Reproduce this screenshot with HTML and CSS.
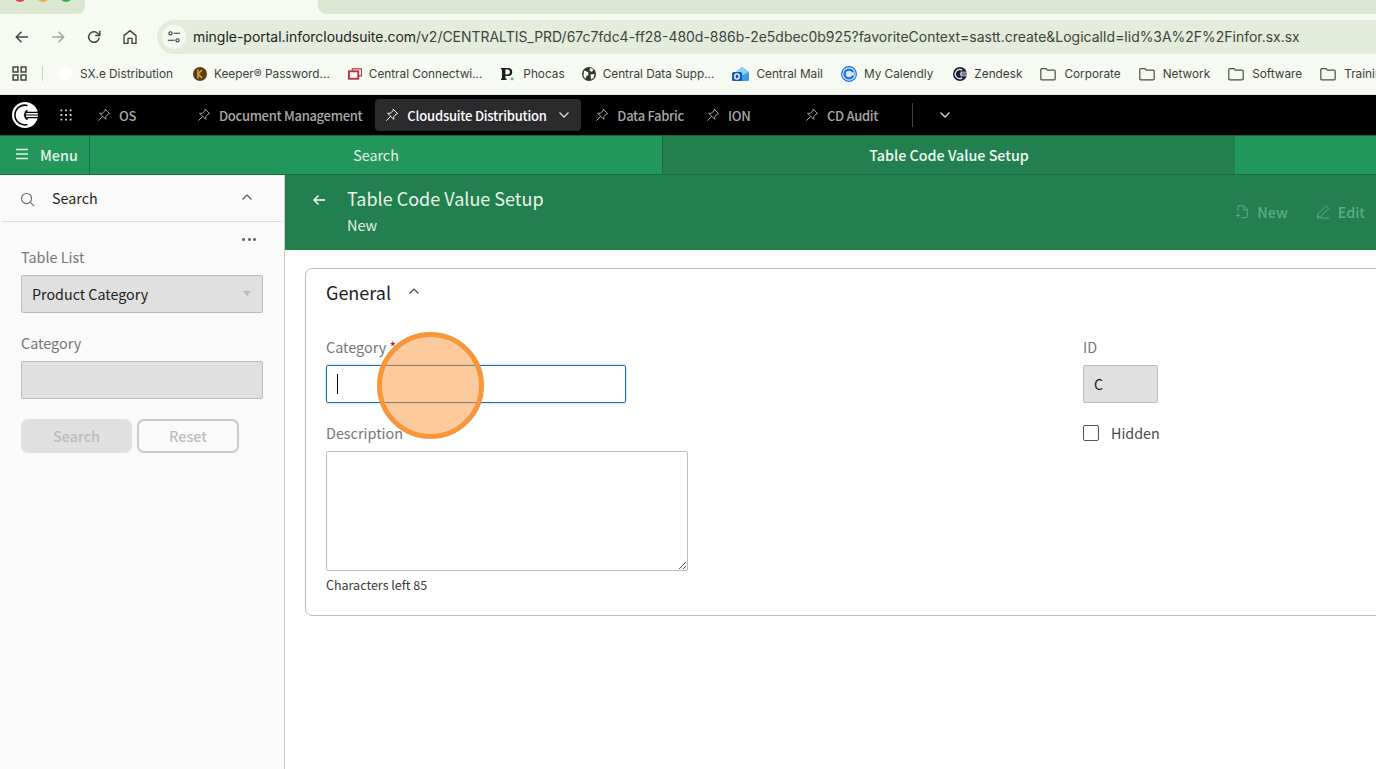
FILE: index.html
```html
<!DOCTYPE html>
<html lang="en">
<head>
<meta charset="utf-8">
<title>Table Code Value Setup</title>
<link rel="stylesheet" href="styles.css">
</head>
<body>
<svg class="defs" width="0" height="0" aria-hidden="true">
  <symbol id="pin" viewBox="0 0 16 16"><path d="M9.6 1.6 14.4 6.4 12.7 6.9 10 10 10 13 3 6 6 6 9.1 3.3ZM6.5 9.5 1.8 14.2" fill="none" stroke="currentColor" stroke-width="1.1" stroke-linejoin="round" stroke-linecap="round"/></symbol>
  <symbol id="folder" viewBox="0 0 16 14"><path d="M.8 2.6Q.8 1.6 1.8 1.6H6L7.4 3.2H14.2Q15.2 3.2 15.2 4.2V11.8Q15.2 12.8 14.2 12.8H1.8Q.8 12.8.8 11.8Z" fill="none" stroke="#4a4f48" stroke-width="1.2"/></symbol>
  <symbol id="chev-up" viewBox="0 0 12 8"><path d="M1.5 6.5 6 2 10.5 6.5" fill="none" stroke="currentColor" stroke-width="1.2"/></symbol>
  <symbol id="chev-down" viewBox="0 0 12 8"><path d="M1.5 1.5 6 6 10.5 1.5" fill="none" stroke="currentColor" stroke-width="1.3"/></symbol>
</svg>

<header class="chrome">
  <div class="tabstrip">
    <div class="strip-left"><i class="light red"></i><i class="light yellow"></i><i class="light green"></i></div>
    <div class="strip-tab"></div>
    <div class="strip-right"></div>
  </div>
  <div class="toolbar">
    <div class="tool-buttons">
      <svg class="tool" viewBox="0 0 16 16"><path d="M14 8H2.5M7.5 2.8 2.3 8l5.2 5.2" fill="none" stroke="#41463f" stroke-width="1.5"/></svg>
      <svg class="tool" viewBox="0 0 16 16"><path d="M2 8h11.5M8.5 2.8 13.7 8l-5.2 5.2" fill="none" stroke="#a3a8a0" stroke-width="1.5"/></svg>
      <svg class="tool" viewBox="0 0 16 16"><path d="M13.2 8.6A5.3 5.3 0 1 1 11.6 4.2L13.4 6" fill="none" stroke="#41463f" stroke-width="1.5"/><path d="M13.8 1.8V6.4H9.2" fill="none" stroke="#41463f" stroke-width="1.5"/></svg>
      <svg class="tool" viewBox="0 0 16 16"><path d="M2 14.4V6.6L8 1.6l6 5v7.8H10V9.4H6v5Z" fill="none" stroke="#41463f" stroke-width="1.4" stroke-linejoin="round"/></svg>
    </div>
    <div class="urlbar">
      <span class="site-info"><svg viewBox="0 0 16 16" width="14" height="14"><circle cx="4" cy="3.8" r="1.9" fill="none" stroke="#333" stroke-width="1.2"/><path d="M7.5 3.8H15M1 11.8H8.5" stroke="#333" stroke-width="1.2"/><circle cx="12" cy="11.8" r="1.9" fill="none" stroke="#333" stroke-width="1.2"/></svg></span>
      <span class="url">mingle-portal.inforcloudsuite.com<span class="url-path">/v2/CENTRALTIS_PRD/67c7fdc4-ff28-480d-886b-2e5dbec0b925?favoriteContext=sastt.create&amp;LogicalId=lid%3A%2F%2Finfor.sx.sx</span></span>
    </div>
  </div>
  <nav class="bookmarks">
    <svg class="apps" viewBox="0 0 14 14"><path d="M1 1h4.5v4.5H1ZM8.5 1H13v4.5H8.5ZM1 8.5h4.5V13H1ZM8.5 8.5H13V13H8.5Z" fill="none" stroke="#3f443d" stroke-width="1.4"/></svg>
    <span class="bm-divider"></span>
    <a class="bm bm-sxe"><svg class="bm-icon" viewBox="0 0 14 14"><circle cx="7" cy="7" r="6.5" fill="#fff"/></svg>SX.e Distribution</a>
    <a class="bm"><svg class="bm-icon" viewBox="0 0 14 14"><circle cx="7" cy="7" r="7" fill="#5b3d12"/><path d="M5 2.5v9M5 7l4-4M5 7l4 4" stroke="#e0a63a" stroke-width="1.5" fill="none"/></svg>Keeper® Password...</a>
    <a class="bm"><svg class="bm-icon" viewBox="0 0 15 13"><path d="M4.5 3V1H14.4V8.5H11.5" fill="none" stroke="#b5333a" stroke-width="1.1"/><rect x="1" y="3.6" width="10" height="8" fill="none" stroke="#b5333a" stroke-width="2"/></svg>Central Connectwi...</a>
    <a class="bm bm-phocas"><svg class="bm-icon" viewBox="0 0 14 14"><path d="M1 1H8.2A4 4 0 0 1 8.2 9H5.4V11.6H6.6V13H1V11.6H2V2.4H1ZM5.4 2.6V7.4H7.6A2.4 2.4 0 0 0 7.6 2.6Z" fill="#1b1b1b" fill-rule="evenodd"/><rect x="10.8" y="10.6" width="2.6" height="2.6" fill="#45b7a8"/></svg>Phocas</a>
    <a class="bm"><svg class="bm-icon" viewBox="0 0 14 14"><circle cx="7" cy="7" r="7" fill="#33372f"/><path d="M2 3.5 6 5 6.5 8 4.5 9 3.5 12 1.5 9ZM8 1 11.5 2 10 5 7.5 3.5ZM8.5 7.5 12.5 7 11.5 11 9 12.500Z" fill="#f6faf1"/></svg>Central Data Supp...</a>
    <a class="bm bm-mail"><svg class="bm-icon bm-icon-wide" viewBox="0 0 17 16"><path d="M4 6 10 1 17 6V14Q17 15 16 15H8Z" fill="#3b9be8"/><path d="M10 1 17 6 11 9 4 6Z" fill="#8fd0f5"/><rect y="6" width="10" height="9" rx="1.5" fill="#0f5fb4"/><ellipse cx="5" cy="10.5" rx="2.2" ry="2.6" fill="none" stroke="#fff" stroke-width="1.3"/></svg>Central Mail</a>
    <a class="bm bm-cal"><svg class="bm-icon bm-icon-cal" viewBox="0 0 16 16"><circle cx="8" cy="8" r="7.4" fill="#dbe9fb" stroke="#1268e0" stroke-width="1.1"/><circle cx="8" cy="8" r="4.4" fill="none" stroke="#1a73f0" stroke-width="2.4"/><path d="M8 8 13 6V10Z" fill="#dbe9fb"/></svg>My Calendly</a>
    <a class="bm bm-zen"><svg class="bm-icon" viewBox="0 0 26 26"><circle cx="13" cy="13" r="13" fill="#1c1f33"/><path d="M17 5.8A8.4 8.4 0 1 0 17 20.2" fill="none" stroke="#f5f7f2" stroke-width="2.2"/><path d="M16 10A4 4 0 0 0 16 16" fill="none" stroke="#f5f7f2" stroke-width="2"/><path d="M14 9.6H26M13 13H26M14 16.4H26" stroke="#f5f7f2" stroke-width="1.5"/></svg>Zendesk</a>
    <a class="bm bm-folder"><svg class="bm-icon-folder"><use href="#folder"/></svg>Corporate</a>
    <a class="bm bm-folder"><svg class="bm-icon-folder"><use href="#folder"/></svg>Network</a>
    <a class="bm bm-folder"><svg class="bm-icon-folder"><use href="#folder"/></svg>Software</a>
    <a class="bm bm-folder"><svg class="bm-icon-folder"><use href="#folder"/></svg>Training</a>
  </nav>
</header>

<div class="app">
  <div class="topnav">
    <svg class="logo" viewBox="0 0 26 26">
      <circle cx="13" cy="13" r="13" fill="#fff"/>
      <path d="M15.5 3.6A9.8 9.8 0 1 0 15.5 22.4" fill="none" stroke="#000" stroke-width="1.6"/>
      <path d="M15.5 8.4A5.4 5.4 0 0 0 15.5 17.6" fill="none" stroke="#000" stroke-width="1.6"/>
      <path d="M13 10.4H26M11.8 13H26M13 15.6H26" stroke="#000" stroke-width="1.2"/>
    </svg>
    <svg class="grid-icon" viewBox="0 0 14 14"><path d="M1.5 1.5h1.8v1.8H1.5zM6.1 1.5h1.8v1.8H6.1zM10.7 1.5h1.8v1.8h-1.8zM1.5 6.1h1.8v1.8H1.5zM6.1 6.1h1.8v1.8H6.1zM10.7 6.1h1.8v1.8h-1.8zM1.5 10.7h1.8v1.8H1.5zM6.1 10.7h1.8v1.8H6.1zM10.7 10.7h1.8v1.8h-1.8z" fill="#d8d8d8"/></svg>
    <a class="navtab navtab-min"><svg class="pin"><use href="#pin"/></svg>OS</a>
    <a class="navtab"><svg class="pin"><use href="#pin"/></svg>Document Management</a>
    <a class="navtab navtab-active"><svg class="pin"><use href="#pin"/></svg>Cloudsuite Distribution<svg class="nav-chev"><use href="#chev-down"/></svg></a>
    <a class="navtab navtab-fabric"><svg class="pin"><use href="#pin"/></svg>Data Fabric</a>
    <a class="navtab navtab-ion"><svg class="pin"><use href="#pin"/></svg>ION</a>
    <a class="navtab"><svg class="pin"><use href="#pin"/></svg>CD Audit</a>
    <span class="nav-divider"></span>
    <svg class="nav-more"><use href="#chev-down"/></svg>
  </div>

  <div class="modulebar">
    <a class="menu-btn"><svg class="menu-icon" viewBox="0 0 14 12"><path d="M1 1.5h12M1 6h12M1 10.5h12" stroke="#e4f3ea" stroke-width="1.3"/></svg>Menu</a>
    <a class="modtab">Search</a>
    <a class="modtab modtab-active">Table Code Value Setup</a>
  </div>

  <div class="workspace">
    <aside class="sidebar">
      <div class="side-head">
        <svg class="side-search" viewBox="0 0 16 16"><circle cx="7" cy="7" r="5.4" fill="none" stroke="#666" stroke-width="1.1"/><path d="M11 11 15 15" stroke="#666" stroke-width="1.1"/></svg>
        <span class="side-title">Search</span>
        <svg class="side-chev"><use href="#chev-up"/></svg>
      </div>
      <div class="side-more"><i></i><i></i><i></i></div>
      <form class="side-form">
        <label class="label">Table List</label>
        <div class="field-disabled field-select">Product Category<span class="caret"></span></div>
        <label class="label label-gap">Category</label>
        <div class="field-disabled"></div>
        <div class="side-actions">
          <button type="button" class="btn btn-search">Search</button>
          <button type="button" class="btn btn-reset">Reset</button>
        </div>
      </form>
    </aside>

    <main class="content">
      <div class="pagehead">
        <svg class="back" viewBox="0 0 14 12"><path d="M13 6H2M6.5 1.5 2 6l4.500 4.500" fill="none" stroke="#fff" stroke-width="1.4"/></svg>
        <div class="pagehead-text">
          <h1 class="page-title">Table Code Value Setup</h1>
          <div class="page-sub">New</div>
        </div>
        <div class="page-actions">
          <a class="action"><svg class="action-icon" viewBox="0 0 16 16"><path d="M3.5 7V1.5H10L14 5.500V13.500Q14 15 12.500 15H7M9.500 1.500V6H14M1 12.500H6M3.500 10V15" fill="none" stroke="currentColor" stroke-width="1.100"/></svg>New</a>
          <a class="action"><svg class="action-icon" viewBox="0 0 16 16"><path d="M11.500 1.500 14.500 4.500 5.500 13.500 1.500 14.500 2.500 10.500ZM1 15.500H15" fill="none" stroke="currentColor" stroke-width="1.100"/></svg>Edit</a>
        </div>
      </div>

      <section class="card">
        <div class="card-head">
          <h2 class="card-title">General</h2>
          <svg class="card-chev"><use href="#chev-up"/></svg>
        </div>
        <div class="card-body">
          <div class="col-left">
            <label class="label">Category <span class="req">*</span></label>
            <div class="input-active"><span class="cursor"></span></div>
            <label class="label label-desc">Description</label>
            <div class="textarea">
              <svg class="grip" viewBox="0 0 8 8"><path d="M1 8 8 1M5 8 8 5" stroke="#555" stroke-width="1"/></svg>
            </div>
            <div class="counter">Characters left 85</div>
          </div>
          <div class="col-right">
            <label class="label">ID</label>
            <div class="field-disabled field-id">C</div>
            <div class="check-row"><span class="checkbox"></span><span class="check-label">Hidden</span></div>
          </div>
        </div>
      </section>
    </main>
  </div>
</div>

<div class="click-marker"></div>
</body>
</html>
```

FILE: styles.css
```css
* { box-sizing: border-box; }
html, body { margin: 0; height: 769px; overflow: hidden; }
body { font-family: "Noto Sans CJK SC", "Noto Sans", sans-serif; background: #fff; color: #222; }
.defs { display: block; height: 0; }
a { text-decoration: none; color: inherit; }
h1, h2 { margin: 0; font-weight: 400; }

/* browser chrome */
.chrome { height: 95px; background: #f6faf2; border-bottom: 1px solid #e3e5e0; font-family: Inter, "Liberation Sans", sans-serif; overflow: hidden; }
.tabstrip { display: flex; height: 14px; overflow: hidden; }
.strip-left { width: 85px; display: flex; gap: 11px; padding-left: 14px; background: #dbe8d1; border-radius: 0 0 8px 0; }
.strip-tab { width: 233px; }
.strip-right { flex: 1; background: #dbe8d1; border-radius: 0 0 0 8px; }
.light { display: block; width: 12px; height: 12px; border-radius: 50%; margin-top: -10px; }
.red { background: #e0443e; }
.yellow { background: #e2b33a; }
.green { background: #35b34a; }

.toolbar { display: flex; align-items: center; height: 34px; margin-top: 6px; }
.tool-buttons { display: flex; width: 157px; padding-left: 14px; gap: 20px; }
.tool { width: 16px; height: 16px; }
.urlbar { flex: 1; height: 34px; display: flex; align-items: center; background: #e4ecdc; border-radius: 17px 0 0 17px; padding-left: 5px; }
.site-info { width: 24px; height: 24px; border-radius: 50%; background: #f6faf2; display: flex; align-items: center; justify-content: center; }
.url { margin-left: 7px; padding-bottom: 2px; font-size: 13.960px; color: #1f231e; white-space: nowrap; }
.url-path { color: #3e443c; }

.bookmarks { display: flex; align-items: center; height: 34px; padding: 5px 0 0 12px; font-size: 11.800px; color: #3a3f38; white-space: nowrap; }
.apps { width: 15px; height: 15px; flex: none; }
.bm-divider { width: 1px; height: 15px; background: #bfe0b8; margin: 0 16px 0 15px; flex: none; }
.bm { display: flex; align-items: center; gap: 7px; margin-right: 18px; flex: none; }
.bm-sxe { margin-right: 20px; }
.bm-icon { width: 14px; height: 14px; flex: none; }
.bm-icon-wide { width: 17px; height: 16px; }
.bm-icon-cal { width: 16px; height: 16px; }
.bm-phocas { gap: 9px; margin-right: 17px; }
.bm-zen { margin-left: 2px; }
.bm-folder { gap: 8px; }
.bm-icon-folder { width: 16px; height: 14px; flex: none; }

/* application */
.app { height: 674px; display: flex; flex-direction: column; }
.topnav { height: 40px; background: #000; display: flex; align-items: center; color: #a9a9a9; font-size: 13px; font-weight: 500; letter-spacing: -.3px; flex: none; }
.logo { width: 26px; height: 26px; margin-left: 12px; flex: none; }
.grid-icon { width: 14px; height: 14px; margin: 0 12px 0 21px; flex: none; }
.navtab { display: flex; align-items: center; height: 32px; padding: 0 12px; flex: none; white-space: nowrap; }
.navtab-min { min-width: 100px; }
.navtab-ion { min-width: 99px; }
.navtab-fabric { margin-left: 2px; padding-right: 10px; }
.pin { width: 14px; height: 14px; margin-right: 8px; flex: none; }
.navtab-active { background: #2b2b2d; color: #fff; border-radius: 4px; padding: 0 10px; width: 206px; margin-left: 1px; letter-spacing: -.2px; }
.nav-chev { width: 12px; height: 8px; margin-left: 11px; color: #ddd; }
.nav-divider { width: 1px; height: 24px; background: #444; margin-left: 22px; }
.nav-more { width: 12px; height: 8px; margin-left: 26px; color: #ddd; }

.modulebar { height: 40px; display: flex; background: #239659; border-top: 1px solid #0f6b3a; border-bottom: 1px solid #17703f; color: #e4f3ea; font-size: 14.300px; flex: none; }
.menu-btn { width: 90px; display: flex; align-items: center; padding: 0 0 2px 15px; gap: 11px; border-right: 1px solid #17703f; font-weight: 500; }
.menu-icon { width: 14px; height: 12px; }
.modtab { width: 572px; display: flex; align-items: center; justify-content: center; padding-bottom: 2px; }
.modtab-active { background: #21804d; border-left: 1px solid #17703f; width: 573px; font-weight: 500; color: #f2f8f4; }

.workspace { flex: 1; display: flex; min-height: 0; }
.sidebar { width: 285px; flex: none; background: #fafafa; border-right: 1px solid #c9c9c9; }
.side-head { height: 47px; display: flex; align-items: center; margin: 0 2px; padding: 0 0 2px 18px; border-bottom: 1px solid #dcdcdc; }
.side-search { width: 15px; height: 15px; margin-top: 5px; }
.side-title { margin-left: 17px; font-size: 14.300px; color: #1f1f1f; font-weight: 400; }
.side-chev { width: 12px; height: 8px; margin-left: auto; margin-right: 29px; color: #555; }
.side-more { display: flex; gap: 2.500px; justify-content: flex-end; padding: 16px 28px 0 0; height: 21px; }
.side-more i { width: 3px; height: 2.500px; background: #666; border-radius: 50%; }
.side-form { padding: 4px 21px 0; }
.label { display: block; font-size: 14.400px; line-height: 20px; color: #74777a; }
.label-gap { margin-top: 20px; }
.field-disabled { height: 38px; background: #e0e0e0; border: 1px solid #bdbdbd; border-radius: 2px; width: 242px; margin-top: 8px; }
.field-select { display: flex; align-items: center; padding: 0 10px 2px; font-size: 14.300px; color: #1c1c1c; justify-content: space-between; }
.caret { border: 4.500px solid transparent; border-top: 5px solid #bbb; border-bottom: 0; margin-right: 1px; }
.side-actions { display: flex; gap: 5px; margin-top: 20px; }
.btn { height: 34px; border-radius: 7px; font-family: inherit; font-size: 14.400px; font-weight: 500; color: #bcbcbc; padding: 0 0 2px; }
.btn-search { width: 111px; background: #e0e0e0; border: 0; }
.btn-reset { width: 102px; background: #fafafa; border: 2px solid #c9c9c9; }

.content { flex: 1; min-width: 0; overflow: hidden; }
.pagehead { height: 75px; background: #21804d; display: flex; color: #fff; }
.back { width: 14px; height: 12px; margin: 19px 0 0 27px; flex: none; }
.pagehead-text { margin-left: 21px; padding-top: 9px; }
.page-title { font-size: 18px; line-height: 28px; color: #e8f3ec; }
.page-sub { font-size: 14.500px; line-height: 20px; margin-top: 3px; color: #e0efe6; }
.page-actions { margin-left: auto; display: flex; gap: 28px; margin-right: 11px; padding-top: 25px; color: #5ead82; font-size: 14.300px; font-weight: 500; }
.action { display: flex; align-items: center; height: 22px; gap: 8px; }
.action-icon { width: 14px; height: 15px; }

.card { width: 1120px; height: 348px; margin: 18px 0 0 20px; border: 1px solid #bdbdbd; border-radius: 7px; background: #fff; padding: 0 20px; }
.card-head { display: flex; align-items: center; height: 48px; padding-bottom: 2px; }
.card-title { font-size: 18px; line-height: 46px; color: #1c1c1c; }
.card-chev { width: 12px; height: 8px; margin: 0 0 2px 17px; color: #444; }
.card-body { display: flex; padding-top: 20px; }
.col-left { width: 757px; flex: none; }
.req { color: #c8102e; }
.input-active { width: 300px; height: 38px; margin-top: 8px; border: 1px solid #1a6fa8; border-radius: 2px; box-shadow: 0 0 3px rgba(60,160,220,.45); display: flex; align-items: center; padding-left: 10px; }
.cursor { width: 1px; height: 20px; background: #000; }
.label-desc { margin-top: 20px; }
.textarea { width: 362px; height: 120px; margin-top: 8px; border: 1px solid #bdbdbd; border-radius: 2px; display: flex; align-items: flex-end; justify-content: flex-end; padding: 1px; }
.grip { width: 8px; height: 8px; }
.counter { font-size: 12.500px; line-height: 18px; margin-top: 5px; color: #3a3a3a; }
.field-id { width: 75px; display: flex; align-items: center; padding: 0 0 2px 10px; font-size: 14.300px; color: #1c1c1c; }
.check-row { display: flex; align-items: center; margin-top: 20px; }
.checkbox { width: 16px; height: 16px; border: 1px solid #555; border-radius: 2px; background: #fff; }
.check-label { margin-left: 12px; font-size: 14.300px; color: #4a4a4a; line-height: 20px; }

/* orange click highlight over the page */
.click-marker { position: absolute; left: 377px; top: 332px; width: 107px; height: 107px; border-radius: 50%; border: 5px solid #f7963a; background: rgba(249, 150, 60, .5); }
```
